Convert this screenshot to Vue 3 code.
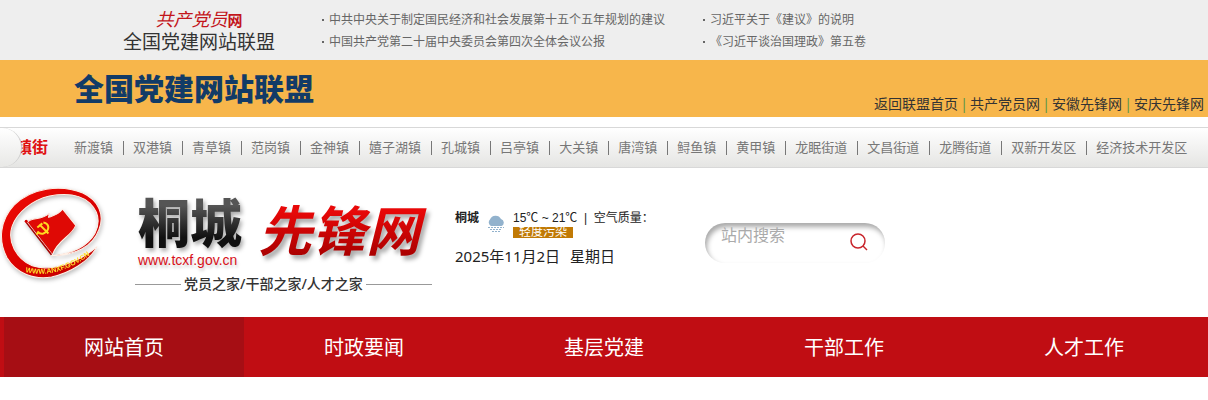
<script setup>
const newsColumns = [
  ['中共中央关于制定国民经济和社会发展第十五个五年规划的建议', '中国共产党第二十届中央委员会第四次全体会议公报'],
  ['习近平关于《建议》的说明', '《习近平谈治国理政》第五卷'],
]
const siteLinks = ['返回联盟首页', '共产党员网', '安徽先锋网', '安庆先锋网']
const towns = [
  '新渡镇', '双港镇', '青草镇', '范岗镇', '金神镇', '嬉子湖镇', '孔城镇', '吕亭镇', '大关镇',
  '唐湾镇', '鲟鱼镇', '黄甲镇', '龙眠街道', '文昌街道', '龙腾街道', '双新开发区', '经济技术开发区',
]
const menu = ['网站首页', '时政要闻', '基层党建', '干部工作', '人才工作']
</script>

<template>
  <div class="page">
    <div class="alliance">
      <a class="alliance-logo" href="#">
        <span class="script-name">共产党员<span class="script-net">网</span></span>
        <span class="alliance-name">全国党建网站联盟</span>
      </a>
      <ul v-for="(column, i) in newsColumns" :key="i" class="news">
        <li v-for="item in column" :key="item"><a href="#">{{ item }}</a></li>
      </ul>
    </div>

    <div class="gold-bar">
      <strong class="gold-title">全国党建网站联盟</strong>
      <nav class="site-links">
        <template v-for="(link, i) in siteLinks" :key="link">
          <span v-if="i" class="pipe">|</span>
          <a href="#">{{ link }}</a>
        </template>
      </nav>
    </div>

    <nav class="towns">
      <span class="towns-label">镇街</span>
      <ul>
        <li v-for="town in towns" :key="town"><a href="#">{{ town }}</a></li>
      </ul>
    </nav>

    <header class="masthead">
      <svg class="emblem" viewBox="2 1 104 95" aria-hidden="true">
        <defs>
          <linearGradient id="ring" x1="0" y1="0" x2="1" y2="1">
            <stop offset="0" stop-color="#f00d05" />
            <stop offset=".55" stop-color="#d90000" />
            <stop offset="1" stop-color="#b80000" />
          </linearGradient>
          <path id="rim" d="M26 86 Q57 94 92 68" />
        </defs>
        <g stroke="#fff0e6" stroke-width="1" stroke-linejoin="round">
          <path fill="url(#ring)" d="M52 70 C72 68 87 62 95 48 C101 36 98 26 90 18 C80 9 66 8 50 11 C33 15 18 27 13 41 C8 56 17 73 33 80 C50 86 78 78 97 61 C89 76 70 87 52 91 C34 94 17 87 8 72 C-1 55 1 35 15 20 C32 3 61 -1 83 8 C98 15 105 29 99 44 C93 61 75 70 52 70Z" />
          <path fill="#df0905" d="M28 37 C33 31 40 36 50 28 L49 32 C54 30 58 30 63 24 L76 40 C72 51 58 54 53 69Z" />
        </g>
        <path d="M27 37 52 69" stroke="#a30000" stroke-width="1.5" />
        <circle cx="27" cy="36" r="1.5" fill="#d40000" />
        <path d="M44 37 C50 38 51 45 44 48 C41 49 39 47 38 46 M40 39 49 48 M38 42 43 38 M39 47 37 49" fill="none" stroke="#ffda20" stroke-width="2" />
        <text class="rim-text"><textPath href="#rim">WWW.ANXF.GOV.CN</textPath></text>
      </svg>

      <div class="brand">
        <div class="brand-row">
          <div class="brand-city">
            <span class="city">桐城</span>
            <span class="url">www.tcxf.gov.cn</span>
          </div>
          <h1 class="pioneer">先锋网</h1>
        </div>
        <p class="tagline"><span>党员之家/干部之家/人才之家</span></p>
      </div>

      <div class="today">
        <div class="weather">
          <strong>桐城</strong>
          <svg class="cloud" viewBox="0 0 18 18" aria-hidden="true">
            <path d="M4 11 A4 4 0 0 1 3 4.5 A6 6 0 0 1 14 4 A3.7 3.7 0 0 1 14.5 11 H4Z" fill="#92b2cd" />
            <path d="M1 12.5 H17 M3 14.5 H15 M5 16.5 H14" stroke="#92b2cd" stroke-width="1" stroke-dasharray="2 1" />
          </svg>
          <div class="reading">
            <span>15℃ ~ 21℃ &nbsp;|&nbsp; 空气质量：</span>
            <span class="air">轻度污染</span>
          </div>
        </div>
        <div class="date"><span>2025年11月2日</span><span>星期日</span></div>
      </div>

      <form class="search" @submit.prevent>
        <input type="text" placeholder="站内搜索" aria-label="站内搜索">
        <button type="submit" aria-label="搜索">
          <svg viewBox="0 0 18 18" aria-hidden="true">
            <circle cx="8" cy="8" r="7" /><path d="M13 13 17 17" />
          </svg>
        </button>
      </form>
    </header>

    <nav class="menu">
      <a v-for="(item, i) in menu" :key="item" href="#" :class="{ active: i === 0 }">{{ item }}</a>
    </nav>
  </div>
</template>

<style>
body { margin: 0; background: #fff; }
</style>

<style scoped>
.page { font-family: "Noto Sans", "Noto Sans CJK SC", sans-serif; font-size: 12px; color: #333; overflow: hidden; }
a { color: inherit; text-decoration: none; }
ul { list-style: none; margin: 0; padding: 0; }

.alliance { display: flex; height: 60px; background: #eee; }
.alliance-logo { display: flex; flex-direction: column; align-items: center; width: 152px; padding-top: 8px; margin: 0 47px 0 123px; }
.script-name { font-size: 18px; font-style: italic; line-height: 22px; color: #c3161c; }
.script-net { font-size: 15px; font-style: normal; font-weight: 700; }
.alliance-name { font-size: 19px; line-height: 22px; white-space: nowrap; }
.news { padding-top: 9px; color: #666; white-space: nowrap; }
.news + .news { margin-left: 38px; }
.news li { display: flex; align-items: center; line-height: 22px; }
.news li::before { content: ""; width: 2px; height: 2px; margin-right: 5px; background: #666; }

.gold-bar { display: flex; justify-content: space-between; height: 57px; padding: 0 4px 0 74px; background: #f7b64b; }
.gold-title { font-size: 30px; font-weight: 900; line-height: 58px; color: #123b67; }
.site-links { display: flex; align-self: flex-end; font-size: 14px; line-height: 26px; }
.pipe { width: 12px; text-align: center; color: #5d9448; }

.towns { position: relative; display: flex; height: 39px; margin-top: 10px; padding-left: 16px; border-top: 1px solid #d8d8d8; border-bottom: 1px solid #d8d8d8; background: linear-gradient(#fff, #e5e5e3); line-height: 39px; white-space: nowrap; }
.towns::before { content: ""; position: absolute; left: 0; top: 0; width: 21px; height: 39px; border-right: 1px solid #ccc; border-radius: 0 20px 20px 0; background: linear-gradient(#fff, #e8e8e6); }
.towns-label { width: 58px; font-size: 16px; font-weight: 700; color: #e01010; }
.towns ul { display: flex; font-size: 13px; color: #777; }
.towns li { display: flex; align-items: center; }
.towns li + li::before { content: ""; width: 1px; height: 14px; margin: 0 9px 0 10px; background: #777; }

.masthead { display: flex; align-items: flex-start; height: 149px; }
.emblem { flex: none; width: 107px; height: 96px; margin: 18px 28px 0 0; filter: drop-shadow(1px 2px 2px #bbb); }
.rim-text { font: 700 7px "Liberation Sans", sans-serif; fill: #ffe02a; }
.brand { flex: none; width: 297px; padding-top: 22px; }
.brand-row { display: flex; height: 84px; }
.brand-city { width: 127px; padding: 4px 0 0 3px; }
.city { display: block; font-size: 52px; font-weight: 900; line-height: 58px; color: transparent; background: linear-gradient(#555 20%, #111 75%); -webkit-background-clip: text; background-clip: text; filter: drop-shadow(2px 3px 2px #aaa); }
.url { display: block; font: 14px/16px "Liberation Sans", sans-serif; color: #d81018; text-shadow: 1px 3px 3px #ccc; }
.pioneer { margin: 0; padding-right: 12px; font-size: 54px; font-style: italic; font-weight: 700; line-height: 80px; white-space: nowrap; color: transparent; background: linear-gradient(#e80808 25%, #a80000 80%); -webkit-background-clip: text; background-clip: text; filter: drop-shadow(3px 4px 2px #aaa); }
.tagline { display: flex; align-items: center; gap: 3px; margin: 0; font-size: 14px; font-weight: 500; line-height: 20px; white-space: nowrap; }
.tagline::before, .tagline::after { content: ""; width: 46px; height: 1px; background: #999; }
.tagline::after { flex: 1; }

.today { flex: none; width: 250px; padding-top: 43px; margin-left: 23px; color: #222; }
.weather { display: flex; align-items: flex-start; line-height: 14px; }
.weather strong { width: 24px; }
.cloud { width: 18px; height: 18px; margin: 4px 8px 0; }
.reading { display: flex; flex-direction: column; align-items: flex-start; gap: 2px; font-family: "Liberation Sans", "Noto Sans CJK SC", sans-serif; white-space: nowrap; }
.air { width: 60px; height: 11px; background: #c17a05; line-height: 11px; text-align: center; color: #fff; }
.date { display: flex; gap: 10px; margin-top: 8px; font-size: 15px; line-height: 20px; }

.search { display: flex; flex: none; box-sizing: border-box; width: 180px; height: 40px; margin-top: 55px; padding: 0 17px 0 16px; border-radius: 20px; box-shadow: inset 2px 4px 5px #aaa; }
.search input { flex: 1; min-width: 0; height: 24px; padding: 0; border: 0; outline: 0; background: none; font: inherit; font-size: 16px; color: #333; }
.search input::placeholder { color: #aaa; }
.search button { width: 18px; height: 18px; padding: 0; margin-top: 10px; border: 0; background: none; }
.search svg { display: block; width: 18px; height: 18px; fill: none; stroke: #c8242b; stroke-width: 1.5; }

.menu { display: flex; height: 60px; padding-left: 4px; background: #c00d13; }
.menu a { flex: none; width: 240px; height: 60px; font-size: 20px; line-height: 62px; text-align: center; color: #fff; }
.menu .active { background: #a60e14; }
</style>
